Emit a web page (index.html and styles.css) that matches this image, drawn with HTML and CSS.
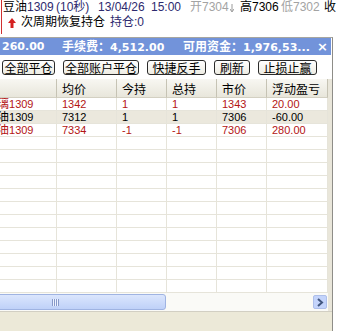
FILE: index.html
```
<!DOCTYPE html>
<html lang="zh">
  <head>
    <meta charset="UTF-8" />
    <title>持仓</title>
    <link rel="stylesheet" href="styles.css">
  </head>
  <body>
    <div class="quote">
      <div class="quote-line">
        <span class="q q-name">豆油<span class="navy">1309</span></span>
        <span class="q q-period navy">(10秒)</span>
        <span class="q q-date navy">13/04/26</span>
        <span class="q q-time navy">15:00</span>
        <span class="q q-open grey">开7304<svg class="tick" width="4" height="8" viewBox="0 0 4 8"><path d="M2 0V7M0 5L2 8L4 5" stroke="#9a9a9a" fill="none"/></svg></span>
        <span class="q q-high">高7306</span>
        <span class="q q-low grey">低7302</span>
        <span class="q">收</span>
      </div>
      <div class="quote-line">
        <svg class="up-arrow" width="8" height="10" viewBox="0 0 8 10"><polygon points="4,0 8,5 5.5,5 5.5,10 2.5,10 2.5,5 0,5" fill="#d42020"/></svg>
        <span class="restore">次周期恢复持仓</span>
        <span class="navy">持仓:0</span>
      </div>
    </div>

    <div class="panel">
      <div class="summary">
        <span class="s-prev">260.00</span>
        <span class="s-fee"><span class="cn">手续费：</span>4,512.00</span>
        <span class="s-cash"><span class="cn">可用资金：</span>1,976,53...</span>
        <span class="close">×</span>
      </div>

      <div class="toolbar">
        <button class="btn btn-a">全部平仓</button>
        <button class="btn btn-b">全部账户平仓</button>
        <button class="btn btn-c">快捷反手</button>
        <button class="btn btn-d">刷新</button>
        <button class="btn btn-e">止损止赢</button>
      </div>

      <div class="grid">
        <div class="grid-view">
          <table class="positions">
            <colgroup>
              <col class="c-name"><col class="c-avg"><col class="c-today"><col class="c-total"><col class="c-price"><col class="c-pnl">
            </colgroup>
            <thead>
              <tr><th></th><th>均价</th><th>今持</th><th>总持</th><th>市价</th><th>浮动盈亏</th></tr>
            </thead>
            <tbody>
              <tr class="loss"><td><span class="cn">玻璃</span>1309</td><td>1342</td><td>1</td><td>1</td><td>1343</td><td>20.00</td></tr>
              <tr class="alt"><td><span class="cn">豆油</span>1309</td><td>7312</td><td>1</td><td>1</td><td>7306</td><td>-60.00</td></tr>
              <tr class="loss"><td><span class="cn">豆油</span>1309</td><td>7334</td><td>-1</td><td>-1</td><td>7306</td><td>280.00</td></tr>
              <tr><td></td><td></td><td></td><td></td><td></td><td></td></tr>
              <tr><td></td><td></td><td></td><td></td><td></td><td></td></tr>
              <tr><td></td><td></td><td></td><td></td><td></td><td></td></tr>
              <tr><td></td><td></td><td></td><td></td><td></td><td></td></tr>
              <tr><td></td><td></td><td></td><td></td><td></td><td></td></tr>
              <tr><td></td><td></td><td></td><td></td><td></td><td></td></tr>
              <tr><td></td><td></td><td></td><td></td><td></td><td></td></tr>
              <tr><td></td><td></td><td></td><td></td><td></td><td></td></tr>
              <tr><td></td><td></td><td></td><td></td><td></td><td></td></tr>
              <tr><td></td><td></td><td></td><td></td><td></td><td></td></tr>
              <tr><td></td><td></td><td></td><td></td><td></td><td></td></tr>
              <tr><td></td><td></td><td></td><td></td><td></td><td></td></tr>
            </tbody>
          </table>
        </div>
        <div class="hscroll">
          <div class="thumb"><span class="grip"></span></div>
          <div class="arrow">
            <svg width="8" height="9" viewBox="0 0 8 9"><path d="M2 1L6 4.5L2 8" stroke="#42577f" stroke-width="2" fill="none"/></svg>
          </div>
        </div>
      </div>

      <div class="footer"></div>
    </div>
  </body>
</html>
```

FILE: styles.css
```
* {
  box-sizing: border-box;
}

body {
  margin: 0;
  width: 340px;
  height: 331px;
  overflow: hidden;
  background: #fff;
  color: #000;
  font-family: "Liberation Sans", "Noto Sans CJK SC", sans-serif;
  font-size: 12px;
}

/* quote strip */
.quote {
  height: 37px;
  padding: 0 0 3px 1px;
}

.quote-line {
  display: flex;
  align-items: center;
  height: 15px;
  line-height: 15px;
  white-space: nowrap;
  border-left: 1px solid #d03030;
}

.quote-line + .quote-line {
  height: 19px;
  padding-bottom: 4px;
}

.q {
  flex: none;
}

.q-name { width: 53px; margin-left: 1px; }
.q-period { width: 42px; }
.q-date { width: 53px; }
.q-time { width: 39px; }
.q-high { width: 41px; }
.q-low { width: 43px; }

.q-open {
  width: 50px;
  display: flex;
  align-items: center;
}

.tick {
  margin-left: 1px;
}

.navy {
  color: #2d2a6e;
}

.grey {
  color: #a3a3a3;
}

.up-arrow {
  margin-left: 6px;
  flex: none;
}

.restore {
  margin-left: 5px;
  margin-right: 5px;
}

/* positions panel */
.panel {
  width: 333px;
  border-top: 1px solid #a7a6a0;
  border-right: 1px solid #8e8d88;
}

.summary {
  display: flex;
  align-items: center;
  height: 17px;
  margin-right: 1px;
  padding-left: 2px;
  background: #7293da;
  color: #fff;
  font-family: "DejaVu Sans", "Noto Sans CJK SC", sans-serif;
  font-size: 11px;
  font-weight: bold;
  line-height: 17px;
  white-space: nowrap;
}

.summary .cn {
  font-family: "Noto Sans CJK SC", sans-serif;
  font-size: 12px;
}

.s-prev { width: 60px; flex: none; }
.s-fee { width: 121px; flex: none; }

.close {
  margin-left: auto;
  margin-right: 3px;
  font-size: 13px;
}

.toolbar {
  display: flex;
  gap: 8px;
  height: 24px;
  padding: 5px 0 0 2px;
}

.btn {
  height: 15px;
  padding: 0;
  border: 1px solid #2a2a2a;
  border-radius: 3px;
  background: linear-gradient(#ffffff, #eeece3);
  color: #000;
  font-family: "Noto Sans CJK SC", sans-serif;
  font-size: 12px;
  line-height: 13px;
}

.btn-a { width: 53px; }
.btn-b { width: 76px; }
.btn-c { width: 59px; }
.btn-d { width: 36px; }
.btn-e { width: 59px; }

.grid {
  border-right: 4px solid #e9e6da;
}

.grid-view {
  height: 214px;
  overflow: hidden;
}

.positions {
  table-layout: fixed;
  width: 348px;
  margin-left: -20px;
  border-collapse: separate;
  border-spacing: 0;
}

.c-name { width: 77px; }
.c-avg { width: 60px; }
.c-today { width: 50px; }
.c-total { width: 50px; }
.c-price { width: 50px; }
.c-pnl { width: 61px; }

.positions th {
  height: 19px;
  padding: 0 0 0 5px;
  text-align: left;
  font-weight: normal;
  font-family: "Noto Sans CJK SC", sans-serif;
  font-size: 12px;
  line-height: 17px;
  background: linear-gradient(#f8f7f2, #e8e6db);
  border-right: 1px solid #c6c3b4;
  border-bottom: 1px solid #d3d0c2;
  white-space: nowrap;
  overflow: hidden;
}

.positions tr {
  height: 13px;
}

.positions td {
  height: 13px;
  padding: 0 0 0 5px;
  font-size: 11px;
  line-height: 12px;
  border-right: 1px solid #e6e4da;
  border-bottom: 1px solid #e6e4da;
  white-space: nowrap;
  overflow: hidden;
}

.positions td .cn {
  font-size: 12px;
  line-height: 12px;
}

.loss td {
  color: #b31414;
}

.alt td {
  background: #ebe8dd;
}

/* horizontal scroll bar */
.hscroll {
  display: flex;
  align-items: flex-start;
  height: 18px;
  background: #fafaf7;
  overflow: hidden;
}

.thumb {
  flex: none;
  display: flex;
  align-items: center;
  justify-content: center;
  width: 222px;
  height: 16px;
  margin: 1px 0 0 -56px;
  border: 1px solid #9fb3e2;
  border-radius: 3px;
  background: linear-gradient(#dbe6fd, #bfd1f8);
}

.grip {
  width: 7px;
  height: 7px;
  background: repeating-linear-gradient(90deg, #8799c9 0 1px, #eef3ff 1px 2px);
}

.arrow {
  display: flex;
  align-items: center;
  justify-content: center;
  width: 14px;
  height: 14px;
  margin: 2px 1px 0 auto;
  border: 1px solid #aebfea;
  border-radius: 2px;
  background: #c4d4fb;
}

.footer {
  height: 20px;
  background: #ece9d8;
  border-top: 1px solid #d2cfc3;
}
```
